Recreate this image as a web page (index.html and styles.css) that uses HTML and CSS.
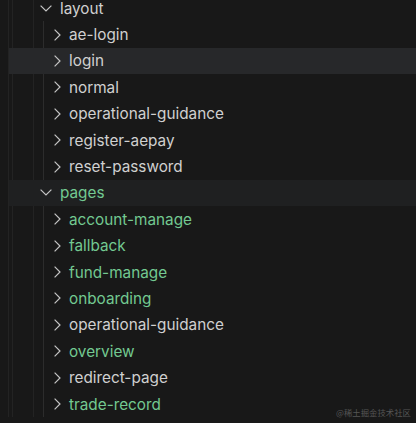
FILE: index.html
```html
<!DOCTYPE html>
<html>
<head>
<meta charset="utf-8">
<link rel="stylesheet" href="styles.css">
</head>
<body>
<div class="tree">
  <div class="row folder">
    <svg class="chev-down" width="12" height="7" viewBox="0 0 12 7"><path d="M0.6 0.6 L6 6 L11.4 0.6" /></svg>
    <span class="label">layout</span>
  </div>
  <div class="group">
    <div class="row child"><svg class="chev-right" width="7" height="12" viewBox="0 0 7 12"><path d="M0.6 0.6 L6 6 L0.6 11.4" /></svg><span class="label">ae-login</span></div>
    <div class="row child hover"><svg class="chev-right" width="7" height="12" viewBox="0 0 7 12"><path d="M0.6 0.6 L6 6 L0.6 11.4" /></svg><span class="label">login</span></div>
    <div class="row child"><svg class="chev-right" width="7" height="12" viewBox="0 0 7 12"><path d="M0.6 0.6 L6 6 L0.6 11.4" /></svg><span class="label">normal</span></div>
    <div class="row child"><svg class="chev-right" width="7" height="12" viewBox="0 0 7 12"><path d="M0.6 0.6 L6 6 L0.6 11.4" /></svg><span class="label">operational-guidance</span></div>
    <div class="row child"><svg class="chev-right" width="7" height="12" viewBox="0 0 7 12"><path d="M0.6 0.6 L6 6 L0.6 11.4" /></svg><span class="label">register-aepay</span></div>
    <div class="row child"><svg class="chev-right" width="7" height="12" viewBox="0 0 7 12"><path d="M0.6 0.6 L6 6 L0.6 11.4" /></svg><span class="label">reset-password</span></div>
  </div>
  <div class="row folder selected">
    <svg class="chev-down" width="12" height="7" viewBox="0 0 12 7"><path d="M0.6 0.6 L6 6 L11.4 0.6" /></svg>
    <span class="label green">pages</span>
  </div>
  <div class="group">
    <div class="row child"><svg class="chev-right" width="7" height="12" viewBox="0 0 7 12"><path d="M0.6 0.6 L6 6 L0.6 11.4" /></svg><span class="label green">account-manage</span></div>
    <div class="row child"><svg class="chev-right" width="7" height="12" viewBox="0 0 7 12"><path d="M0.6 0.6 L6 6 L0.6 11.4" /></svg><span class="label green">fallback</span></div>
    <div class="row child"><svg class="chev-right" width="7" height="12" viewBox="0 0 7 12"><path d="M0.6 0.6 L6 6 L0.6 11.4" /></svg><span class="label green">fund-manage</span></div>
    <div class="row child"><svg class="chev-right" width="7" height="12" viewBox="0 0 7 12"><path d="M0.6 0.6 L6 6 L0.6 11.4" /></svg><span class="label green">onboarding</span></div>
    <div class="row child"><svg class="chev-right" width="7" height="12" viewBox="0 0 7 12"><path d="M0.6 0.6 L6 6 L0.6 11.4" /></svg><span class="label">operational-guidance</span></div>
    <div class="row child"><svg class="chev-right" width="7" height="12" viewBox="0 0 7 12"><path d="M0.6 0.6 L6 6 L0.6 11.4" /></svg><span class="label green">overview</span></div>
    <div class="row child"><svg class="chev-right" width="7" height="12" viewBox="0 0 7 12"><path d="M0.6 0.6 L6 6 L0.6 11.4" /></svg><span class="label">redirect-page</span></div>
    <div class="row child"><svg class="chev-right" width="7" height="12" viewBox="0 0 7 12"><path d="M0.6 0.6 L6 6 L0.6 11.4" /></svg><span class="label green">trade-record</span></div>
  </div>
</div>
<div class="watermark">@稀土掘金技术社区</div>
</body>
</html>
```
FILE: styles.css
```css
html, body {
  margin: 0;
  padding: 0;
  background: #181818;
  overflow: hidden;
  height: 423px;
}
body {
  font-family: "Inter", "Noto Sans", sans-serif;
  font-size: 15.3px;
  color: #cccccc;
  position: relative;
}
.tree {
  margin-top: -5px;
  margin-left: 8px;
  border-left: 1px solid #232323;
  background-image:
    linear-gradient(#232323, #232323),
    linear-gradient(#232323, #232323);
  background-size: 1px 100%, 1px 100%;
  background-position: 3px 0, 24px 0;
  background-repeat: no-repeat;
}
.row {
  height: 26.4px;
  display: flex;
  align-items: center;
  white-space: nowrap;
}
.folder {
  padding-left: 31px;
}
.chev-down {
  margin-right: 8px;
  fill: none;
  stroke: #c5c5c5;
  stroke-width: 1.2;
}
.chev-right {
  margin-left: 10px;
  margin-right: 8px;
  fill: none;
  stroke: #c5c5c5;
  stroke-width: 1.2;
}
.group {
  margin-left: 34px;
  border-left: 1px solid #2c2c2c;
}
.group .row {
  margin-left: -35px;
  padding-left: 34px;
}
.group .row .chev-right {
  margin-left: 11px;
}
.hover {
  background: #27282a;
}
.selected {
  background: #1f2021;
}
.label {
  color: #d0d0d0;
}
.green {
  color: #73c991;
}
.watermark {
  position: absolute;
  right: 5px;
  bottom: 5px;
  font-family: "Noto Sans CJK SC", sans-serif;
  font-size: 8.4px;
  color: #555555;
}
```
